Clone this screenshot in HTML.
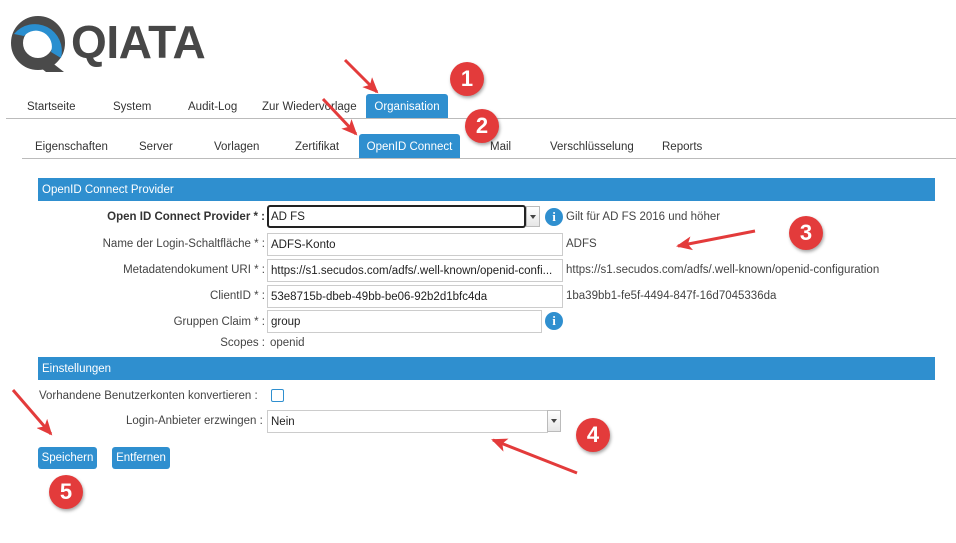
<!DOCTYPE html>
<html><head><meta charset="utf-8"><style>
*{margin:0;padding:0;box-sizing:border-box}
body{width:956px;height:543px;background:#fff;position:relative;overflow:hidden;font-family:"Liberation Sans","DejaVu Sans",sans-serif;font-size:11.5px;color:#333}
.a{position:absolute;white-space:nowrap}
.tab{position:absolute;font-size:11.5px;color:#333}
.blue{background:#2f8fcf;color:#fff;border-radius:3px 3px 0 0;text-align:center}
.hdr{position:absolute;left:38px;width:897px;background:#2f8fcf;color:#fff;font-size:11.5px;padding-left:4px}
.inp{position:absolute;border:1px solid #ccc;background:#fff;height:23px;padding:0 3px;line-height:22px;font-size:11.5px;color:#222;white-space:nowrap;overflow:hidden}
.lbl{position:absolute;right:691px;text-align:right;white-space:nowrap;color:#444}
.btn{position:absolute;background:#2f8fcf;color:#fff;border-radius:3px;font-size:11.5px;text-align:center;line-height:22px;height:22px}
.dd{position:absolute;width:14px;background:linear-gradient(#fff,#e6e6e6);border:1px solid #bbb}
.dd:after{content:"";position:absolute;left:3px;top:8px;border:3px solid transparent;border-top:4px solid #444}
.info{position:absolute;width:18px;height:18px;border-radius:50%;background:#2f8fcf;color:#fff;font-weight:bold;font-family:"Liberation Serif",serif;font-size:13px;text-align:center;line-height:18px}
.num{position:absolute;width:34px;height:34px;border-radius:50%;background:#e33b3b;color:#fff;font-weight:bold;font-size:22px;text-align:center;line-height:34px;box-shadow:1px 2px 3px rgba(0,0,0,.35)}
</style></head><body>
<svg class="a" style="left:0;top:0" width="70" height="80" viewBox="0 0 70 80">
<circle cx="38" cy="43" r="21" fill="none" stroke="#4a4a4a" stroke-width="12"/>
<path d="M46 58 L64 72 L46 72 L36 64 Z" fill="#4a4a4a"/>
<path d="M14 34 A27 27 0 0 1 61 58 L51 52 A16 16 0 0 0 24 36 Z" fill="#2a8fd0"/>
</svg>
<div class="a" style="left:71px;top:16px;font-size:46px;font-weight:bold;color:#474747;letter-spacing:-0.4px;line-height:52px">QIATA</div>

<div class="tab" style="left:27px;top:101px">Startseite</div>
<div class="tab" style="left:113px;top:101px">System</div>
<div class="tab" style="left:188px;top:101px">Audit-Log</div>
<div class="tab" style="left:262px;top:101px">Zur Wiedervorlage</div>
<div class="tab blue" style="left:366px;top:94px;width:82px;height:24px;line-height:26px">Organisation</div>
<div class="a" style="left:6px;top:118px;width:950px;height:1px;background:#bbb"></div>

<div class="tab" style="left:35px;top:141px">Eigenschaften</div>
<div class="tab" style="left:139px;top:141px">Server</div>
<div class="tab" style="left:214px;top:141px">Vorlagen</div>
<div class="tab" style="left:295px;top:141px">Zertifikat</div>
<div class="tab blue" style="left:359px;top:134px;width:101px;height:24px;line-height:26px">OpenID Connect</div>
<div class="tab" style="left:490px;top:141px">Mail</div>
<div class="tab" style="left:550px;top:141px">Verschlüsselung</div>
<div class="tab" style="left:662px;top:141px">Reports</div>
<div class="a" style="left:22px;top:158px;width:934px;height:1px;background:#bbb"></div>

<div class="hdr" style="top:178px;height:23px;line-height:24px">OpenID Connect Provider</div>

<div class="lbl" style="top:211px;font-weight:bold;color:#333">Open ID Connect Provider * :</div>
<div class="inp" style="left:267px;top:205px;width:259px;border:2px solid #222;border-radius:3px;padding:0 2px;line-height:20px">AD FS</div>
<div class="dd" style="left:526px;top:206px;height:21px"></div>
<div class="info" style="left:545px;top:208px">i</div>
<div class="a" style="left:566px;top:211px;color:#444">Gilt für AD FS 2016 und höher</div>

<div class="lbl" style="top:238px">Name der Login-Schaltfläche * :</div>
<div class="inp" style="left:267px;top:233px;width:296px">ADFS-Konto</div>
<div class="a" style="left:566px;top:238px;color:#444">ADFS</div>

<div class="lbl" style="top:264px">Metadatendokument URI * :</div>
<div class="inp" style="left:267px;top:259px;width:296px">https://s1.secudos.com/adfs/.well-known/openid-confi...</div>
<div class="a" style="left:566px;top:264px;color:#444">https://s1.secudos.com/adfs/.well-known/openid-configuration</div>

<div class="lbl" style="top:290px">ClientID * :</div>
<div class="inp" style="left:267px;top:285px;width:296px">53e8715b-dbeb-49bb-be06-92b2d1bfc4da</div>
<div class="a" style="left:566px;top:290px;color:#444">1ba39bb1-fe5f-4494-847f-16d7045336da</div>

<div class="lbl" style="top:316px">Gruppen Claim * :</div>
<div class="inp" style="left:267px;top:310px;width:275px">group</div>
<div class="info" style="left:545px;top:312px">i</div>

<div class="lbl" style="top:337px">Scopes :</div>
<div class="a" style="left:270px;top:337px;color:#444">openid</div>

<div class="hdr" style="top:357px;height:23px;line-height:24px">Einstellungen</div>

<div class="a" style="left:39px;top:390px;color:#444">Vorhandene Benutzerkonten konvertieren :</div>
<div class="a" style="left:271px;top:389px;width:13px;height:13px;border:1.5px solid #2f8fcf;border-radius:2px"></div>
<div class="a" style="left:126px;top:415px;color:#444">Login-Anbieter erzwingen :</div>
<div class="inp" style="left:267px;top:410px;width:281px">Nein</div>
<div class="dd" style="left:547px;top:410px;height:22px"></div>

<div class="btn" style="left:38px;top:447px;width:59px">Speichern</div>
<div class="btn" style="left:112px;top:447px;width:58px">Entfernen</div>

<svg class="a" style="left:0;top:0" width="956" height="543">
<defs><marker id="m" markerUnits="userSpaceOnUse" markerWidth="16" markerHeight="14" refX="14" refY="7" orient="auto"><path d="M0 0 L16 7 L0 14 L4 7 Z" fill="#e33b3b"/></marker></defs>
<g stroke="#e33b3b" stroke-width="3" fill="none" marker-end="url(#m)">
<line x1="345" y1="60" x2="377" y2="92"/>
<line x1="323" y1="99" x2="356" y2="134"/>
<line x1="755" y1="231" x2="678" y2="246"/>
<line x1="577" y1="473" x2="493" y2="440"/>
<line x1="13" y1="390" x2="51" y2="434"/>
</g></svg>
<div class="num" style="left:450px;top:62px">1</div>
<div class="num" style="left:465px;top:109px">2</div>
<div class="num" style="left:789px;top:216px">3</div>
<div class="num" style="left:576px;top:418px">4</div>
<div class="num" style="left:49px;top:475px">5</div>
</body></html>
